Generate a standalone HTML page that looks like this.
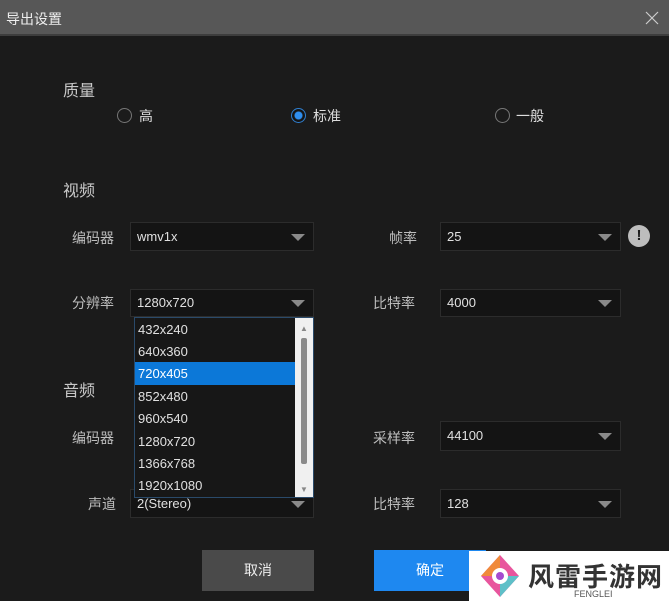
<!DOCTYPE html>
<html><head><meta charset="utf-8"><style>
*{margin:0;padding:0;box-sizing:border-box}
body{width:669px;height:601px;background:#1b1b1b;position:relative;overflow:hidden;font-family:"Liberation Sans","Noto Sans CJK SC",sans-serif;color:#d0d0d0;font-size:14px}
.a{position:absolute;white-space:nowrap}
.sel{position:absolute;background:#141414;border:1px solid #2c2c2c;color:#e0e0e0;padding-left:6px;font-size:13px}
.sel:after{content:"";position:absolute;right:8px;top:50%;margin-top:-3px;border-left:7px solid transparent;border-right:7px solid transparent;border-top:7px solid #8a8a8a}
.lab{color:#bdbdbd;font-size:14px}
.h{color:#c8c8c8;font-size:16px}
.rad{position:absolute;width:15px;height:15px;border-radius:50%;border:1.5px solid #777}
.it{position:absolute;left:0;width:160px;height:23px;line-height:23px;padding-left:3px;font-size:13px;color:#e0e0e0}
</style></head><body>
<div class="a" style="left:0;top:0;width:669px;height:36px;background:#575757;border-bottom:2px solid #3d3d3d"></div>
<div class="a" style="left:6px;top:9px;font-size:14px;color:#eee">导出设置</div>
<svg class="a" style="left:645px;top:11px" width="14" height="14" viewBox="0 0 14 14"><path d="M1 1L13 13M13 1L1 13" stroke="#ccc" stroke-width="1.2"/></svg>

<div class="a h" style="left:63px;top:77px">质量</div>
<div class="rad" style="left:117px;top:108px"></div><div class="a" style="left:139px;top:106px;color:#ddd">高</div>
<div class="rad" style="left:291px;top:108px;border-color:#2f7fd0;background:radial-gradient(circle,#2f8ff0 3.5px,#151515 4.5px)"></div><div class="a" style="left:313px;top:106px;color:#ddd">标准</div>
<div class="rad" style="left:495px;top:108px"></div><div class="a" style="left:516px;top:106px;color:#ddd">一般</div>

<div class="a h" style="left:63px;top:177px">视频</div>
<div class="a lab" style="left:72px;top:228px">编码器</div>
<div class="sel" style="left:130px;top:222px;width:184px;height:29px;line-height:27px">wmv1x</div>
<div class="a lab" style="left:389px;top:228px">帧率</div>
<div class="sel" style="left:440px;top:222px;width:181px;height:29px;line-height:27px">25</div>
<div class="a" style="left:628px;top:225px;width:22px;height:22px;border-radius:50%;background:#bdbdbd;color:#1b1b1b;font-weight:bold;text-align:center;line-height:22px;font-size:15px">!</div>

<div class="a lab" style="left:72px;top:293px">分辨率</div>
<div class="sel" style="left:130px;top:289px;width:184px;height:28px;line-height:26px">1280x720</div>
<div class="a lab" style="left:373px;top:293px">比特率</div>
<div class="sel" style="left:440px;top:289px;width:181px;height:28px;line-height:26px">4000</div>

<div class="a h" style="left:63px;top:377px">音频</div>
<div class="a lab" style="left:72px;top:428px">编码器</div>
<div class="a lab" style="left:373px;top:428px">采样率</div>
<div class="sel" style="left:440px;top:421px;width:181px;height:30px;line-height:28px">44100</div>

<div class="a lab" style="left:88px;top:494px">声道</div>
<div class="sel" style="left:130px;top:489px;width:184px;height:29px;line-height:27px">2(Stereo)</div>
<div class="a lab" style="left:373px;top:494px">比特率</div>
<div class="sel" style="left:440px;top:489px;width:181px;height:29px;line-height:27px">128</div>

<div class="a" style="left:134px;top:317px;width:180px;height:181px;background:#171717;border:1px solid #2a4a6a">
<div class="it" style="top:0">432x240</div>
<div class="it" style="top:22px">640x360</div>
<div class="it" style="top:44px;background:#0c78d8;color:#fff">720x405</div>
<div class="it" style="top:67px">852x480</div>
<div class="it" style="top:89px">960x540</div>
<div class="it" style="top:112px">1280x720</div>
<div class="it" style="top:134px">1366x768</div>
<div class="it" style="top:156px">1920x1080</div>
<div class="a" style="left:160px;top:0;width:18px;height:179px;background:#f0f0f0"></div>
<div class="a" style="left:165px;top:6px;font-size:8px;color:#888">▲</div>
<div class="a" style="left:165px;top:167px;font-size:8px;color:#888">▼</div>
<div class="a" style="left:166px;top:20px;width:6px;height:126px;background:#8a8a8a;border-radius:2px"></div>
</div>

<div class="a" style="left:202px;top:550px;width:112px;height:41px;background:#4a4a4a;color:#eee;text-align:center;line-height:41px">取消</div>
<div class="a" style="left:374px;top:550px;width:112px;height:41px;background:#1e88f0;color:#fff;text-align:center;line-height:41px">确定</div>

<div class="a" style="left:469px;top:551px;width:200px;height:50px;background:#fff"></div>
<svg class="a" style="left:475px;top:553px" width="50" height="46" viewBox="0 0 50 46"><path d="M25 2 L44 23 L25 44 L6 23Z" fill="#e8559d"/><path d="M25 23 L44 23 L25 44Z" fill="#5ec0c8"/><path d="M6 23 L25 2 L25 23Z" fill="#f08a3a"/><circle cx="25" cy="23" r="8" fill="#fff"/><circle cx="25" cy="23" r="4" fill="#a54ad0"/></svg>
<div class="a" style="left:528px;top:557px;font-size:26px;font-weight:bold;color:#333;letter-spacing:1px">风雷手游网</div>
<div class="a" style="left:574px;top:589px;font-size:9px;color:#555">FENGLEI</div>
</body></html>
